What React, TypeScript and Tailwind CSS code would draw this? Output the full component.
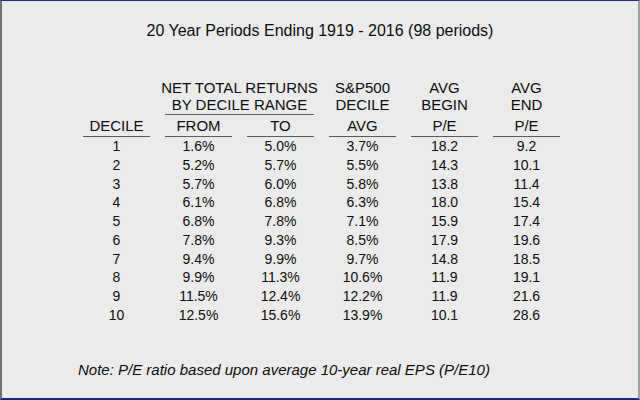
import React from 'react';

const ROWS: [string, string, string, string, string, string][] = [
  ['1', '1.6%', '5.0%', '3.7%', '18.2', '9.2'],
  ['2', '5.2%', '5.7%', '5.5%', '14.3', '10.1'],
  ['3', '5.7%', '6.0%', '5.8%', '13.8', '11.4'],
  ['4', '6.1%', '6.8%', '6.3%', '18.0', '15.4'],
  ['5', '6.8%', '7.8%', '7.1%', '15.9', '17.4'],
  ['6', '7.8%', '9.3%', '8.5%', '17.9', '19.6'],
  ['7', '9.4%', '9.9%', '9.7%', '14.8', '18.5'],
  ['8', '9.9%', '11.3%', '10.6%', '11.9', '19.1'],
  ['9', '11.5%', '12.4%', '12.2%', '11.9', '21.6'],
  ['10', '12.5%', '15.6%', '13.9%', '10.1', '28.6'],
];

const BOTTOM_HEADERS = ['DECILE', 'FROM', 'TO', 'AVG', 'P/E', 'P/E'];

const App: React.FC = () => {
  return (
    <div
      className="w-[640px] h-[400px] bg-[#ebebeb] text-[#0d0d0d] border-t border-t-[#1f2a86] border-l-2 border-l-[#6f6f6f] border-r-2 border-r-[#9aa3a3] border-b-2 border-b-[#1f2a86] flex flex-col overflow-hidden"
      style={{ fontFamily: '"Liberation Sans", Arial, sans-serif' }}
    >
      <h1 className="pt-[21px] text-center text-[16px] leading-[18px] font-normal">
        20 Year Periods Ending 1919 - 2016 (98 periods)
      </h1>

      <div className="ml-[81px] mt-[39px] grid grid-cols-[repeat(6,67px)] gap-x-[15px] text-[15px] leading-[17px] text-center">
        {/* header row 1 */}
        <div />
        <div className="col-span-2 -mx-[8px] whitespace-nowrap">NET TOTAL RETURNS</div>
        <div>S&amp;P500</div>
        <div>AVG</div>
        <div>AVG</div>

        {/* header row 2 */}
        <div className="pb-[1px]" />
        <div className="col-span-2 pb-[1px] border-b border-[#5a5a5a] whitespace-nowrap">BY DECILE RANGE</div>
        <div className="pb-[1px]">DECILE</div>
        <div className="pb-[1px]">BEGIN</div>
        <div className="pb-[1px]">END</div>

        {/* header row 3 */}
        {BOTTOM_HEADERS.map((h, i) => (
          <div key={i} className="mt-[2px] pb-[2px] border-b border-[#5a5a5a]">
            {h}
          </div>
        ))}
      </div>

      <div className="ml-[81px] flex flex-col text-[14px]">
        {ROWS.map((row) => (
          <div key={row[0]} className="grid grid-cols-[repeat(6,67px)] gap-x-[15px] h-[18.75px] leading-[18.75px] text-center">
            {row.map((cell, i) => (
              <div key={i}>{cell}</div>
            ))}
          </div>
        ))}
      </div>

      <p className="ml-[76px] mt-[36px] text-[15px] leading-[18px] italic">
        Note: P/E ratio based upon average 10-year real EPS (P/E10)
      </p>
    </div>
  );
};

export default App;
